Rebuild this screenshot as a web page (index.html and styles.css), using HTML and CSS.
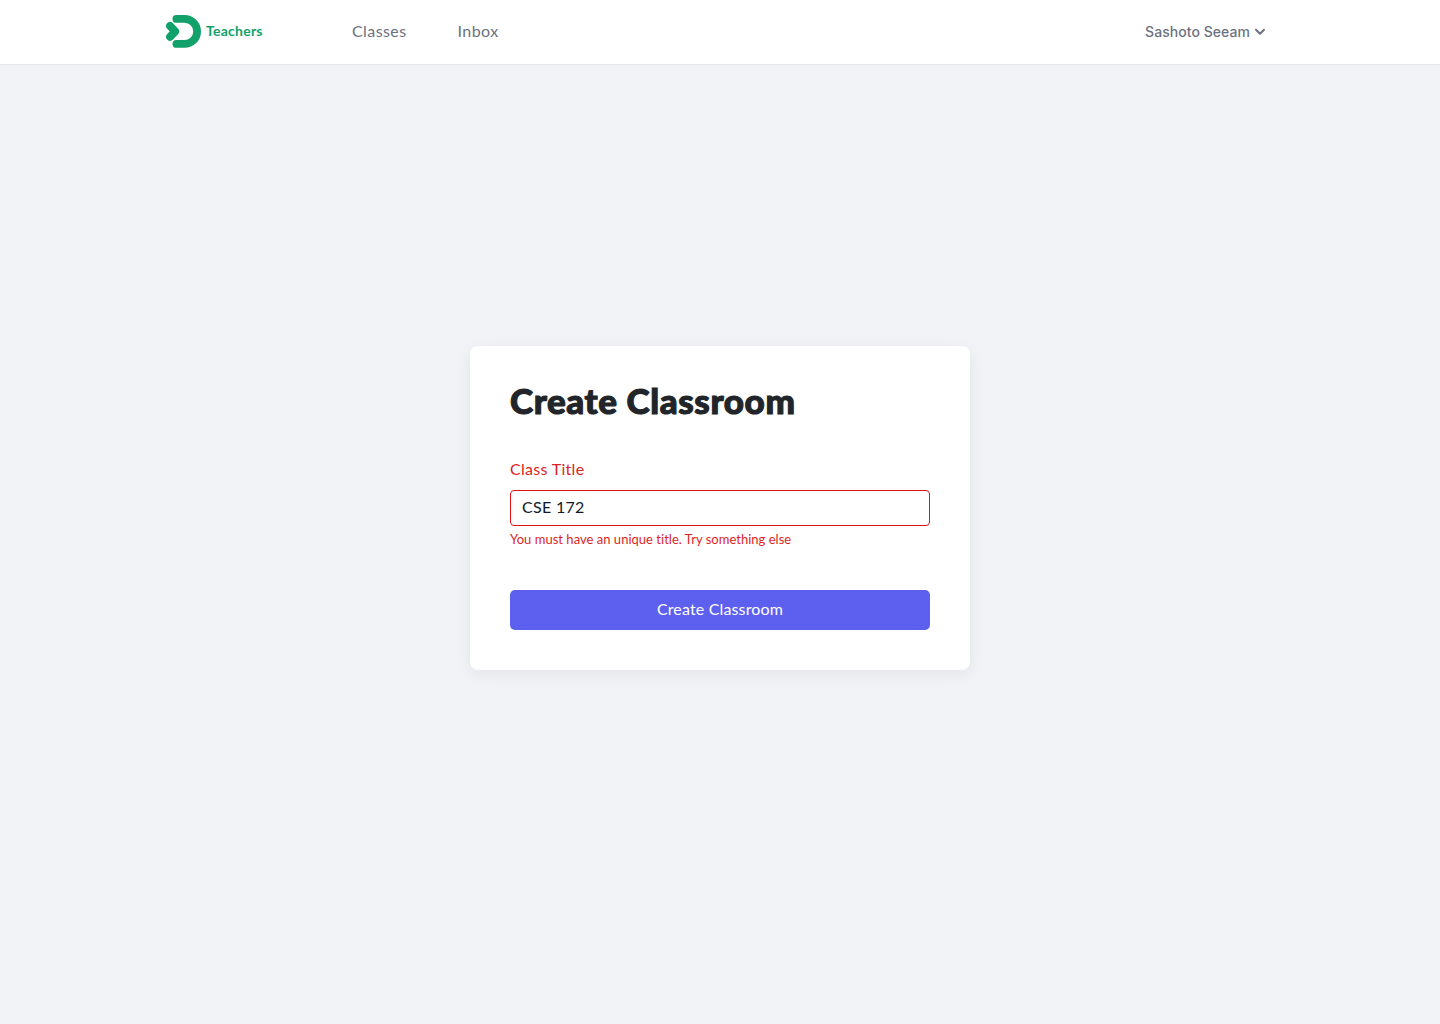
FILE: index.html
```html
<!DOCTYPE html>
<html lang="en">
<head>
<meta charset="utf-8">
<title>Create Classroom</title>
<link rel="stylesheet" href="styles.css">
</head>
<body>
<header class="navbar">
  <div class="navbar-inner">
    <a class="brand">
      <svg class="brand-mark" width="36" height="34" viewBox="0 0 36 34" fill="none" stroke="currentColor" stroke-width="7.8" stroke-linecap="round" stroke-linejoin="round">
        <path d="M10.4 3.9H18.6A12.5 12.5 0 0 1 18.6 28.9H10.4"/>
        <path d="M4.1 11L9.2 16.4L4.1 21.8" stroke-width="8"/>
      </svg>
      <span class="brand-name">Teachers</span>
    </a>
    <nav class="links">
      <a class="link">Classes</a>
      <a class="link">Inbox</a>
    </nav>
    <button class="account" type="button">
      <span>Sashoto Seeam</span>
      <svg width="12" height="8" viewBox="0 0 12 8" fill="none" stroke="currentColor" stroke-width="2" stroke-linecap="round" stroke-linejoin="round"><path d="M2 1.8L6 5.8L10 1.8"/></svg>
    </button>
  </div>
</header>
<main class="page">
  <form class="card">
    <h1 class="title">Create Classroom</h1>
    <label class="label" for="class-title">Class Title</label>
    <input class="input" id="class-title" type="text" value="CSE 172">
    <p class="error">You must have an unique title. Try something else</p>
    <button class="submit" type="button"><span>Create Classroom</span></button>
  </form>
</main>
</body>
</html>
```
FILE: styles.css
```css
* { box-sizing: border-box; }
body {
  margin: 0;
  min-height: 1024px;
  display: flex;
  flex-direction: column;
  background: #f2f3f6;
  font-family: Lato, sans-serif;
  font-size: 16px;
}
.navbar {
  height: 65px;
  background: #fff;
  border-bottom: 1px solid #e5e7eb;
}
.navbar-inner {
  height: 64px;
  width: 1110px;
  margin: 0 auto;
  padding: 0 9px 0 1px;
  display: flex;
  align-items: center;
}
.brand {
  display: flex;
  align-items: center;
  gap: 4px;
  width: 186px;
  color: #12a16b;
}
.brand-name {
  font-size: 14px;
  font-weight: 700;
  line-height: 20px;
  margin-top: -2px;
  letter-spacing: 0.25px;
}
.links { display: flex; gap: 51px; margin-top: -2px; }
.link { color: #6b7280; line-height: 24px; letter-spacing: 0.42px; }
.account {
  margin-left: auto;
  padding: 0;
  border: 0;
  background: none;
  display: flex;
  align-items: center;
  gap: 4px;
  color: #6b7280;
  font: 500 14px/20px Inter, sans-serif;
  letter-spacing: 0.05px;
}
.page {
  flex: 1;
  display: flex;
  align-items: center;
  justify-content: center;
  padding-bottom: 73px;
}
.card {
  width: 500px;
  height: 324px;
  padding: 30px 40px 40px;
  display: flex;
  flex-direction: column;
  background: #fff;
  border-radius: 8px;
  box-shadow: 0 4px 16px rgba(30, 35, 60, 0.07);
}
.title {
  margin: 0;
  font-size: 35px;
  font-weight: 900;
  line-height: 48px;
  letter-spacing: 0.6px;
  color: #212529;
  -webkit-text-stroke: 1.1px #212529;
}
.label { margin-top: 33px; line-height: 24px; letter-spacing: 0.3px; color: #dc1f1f; }
.input {
  margin-top: 9px;
  height: 36px;
  padding: 0 11px 3px;
  border: 1px solid #dc1414;
  border-radius: 4px;
  background: #fff;
  color: #111827;
  font: inherit;
  letter-spacing: 0.3px;
}
.error {
  margin: 3px 0 0;
  font-size: 13px;
  line-height: 20px;
  letter-spacing: 0.02px;
  color: #dc1f1f;
}
.submit {
  margin-top: auto;
  height: 40px;
  padding: 0 0 3px;
  border: 0;
  border-radius: 5px;
  background: #5d5fef;
  color: #fff;
  font: inherit;
  letter-spacing: 0.15px;
}
```
